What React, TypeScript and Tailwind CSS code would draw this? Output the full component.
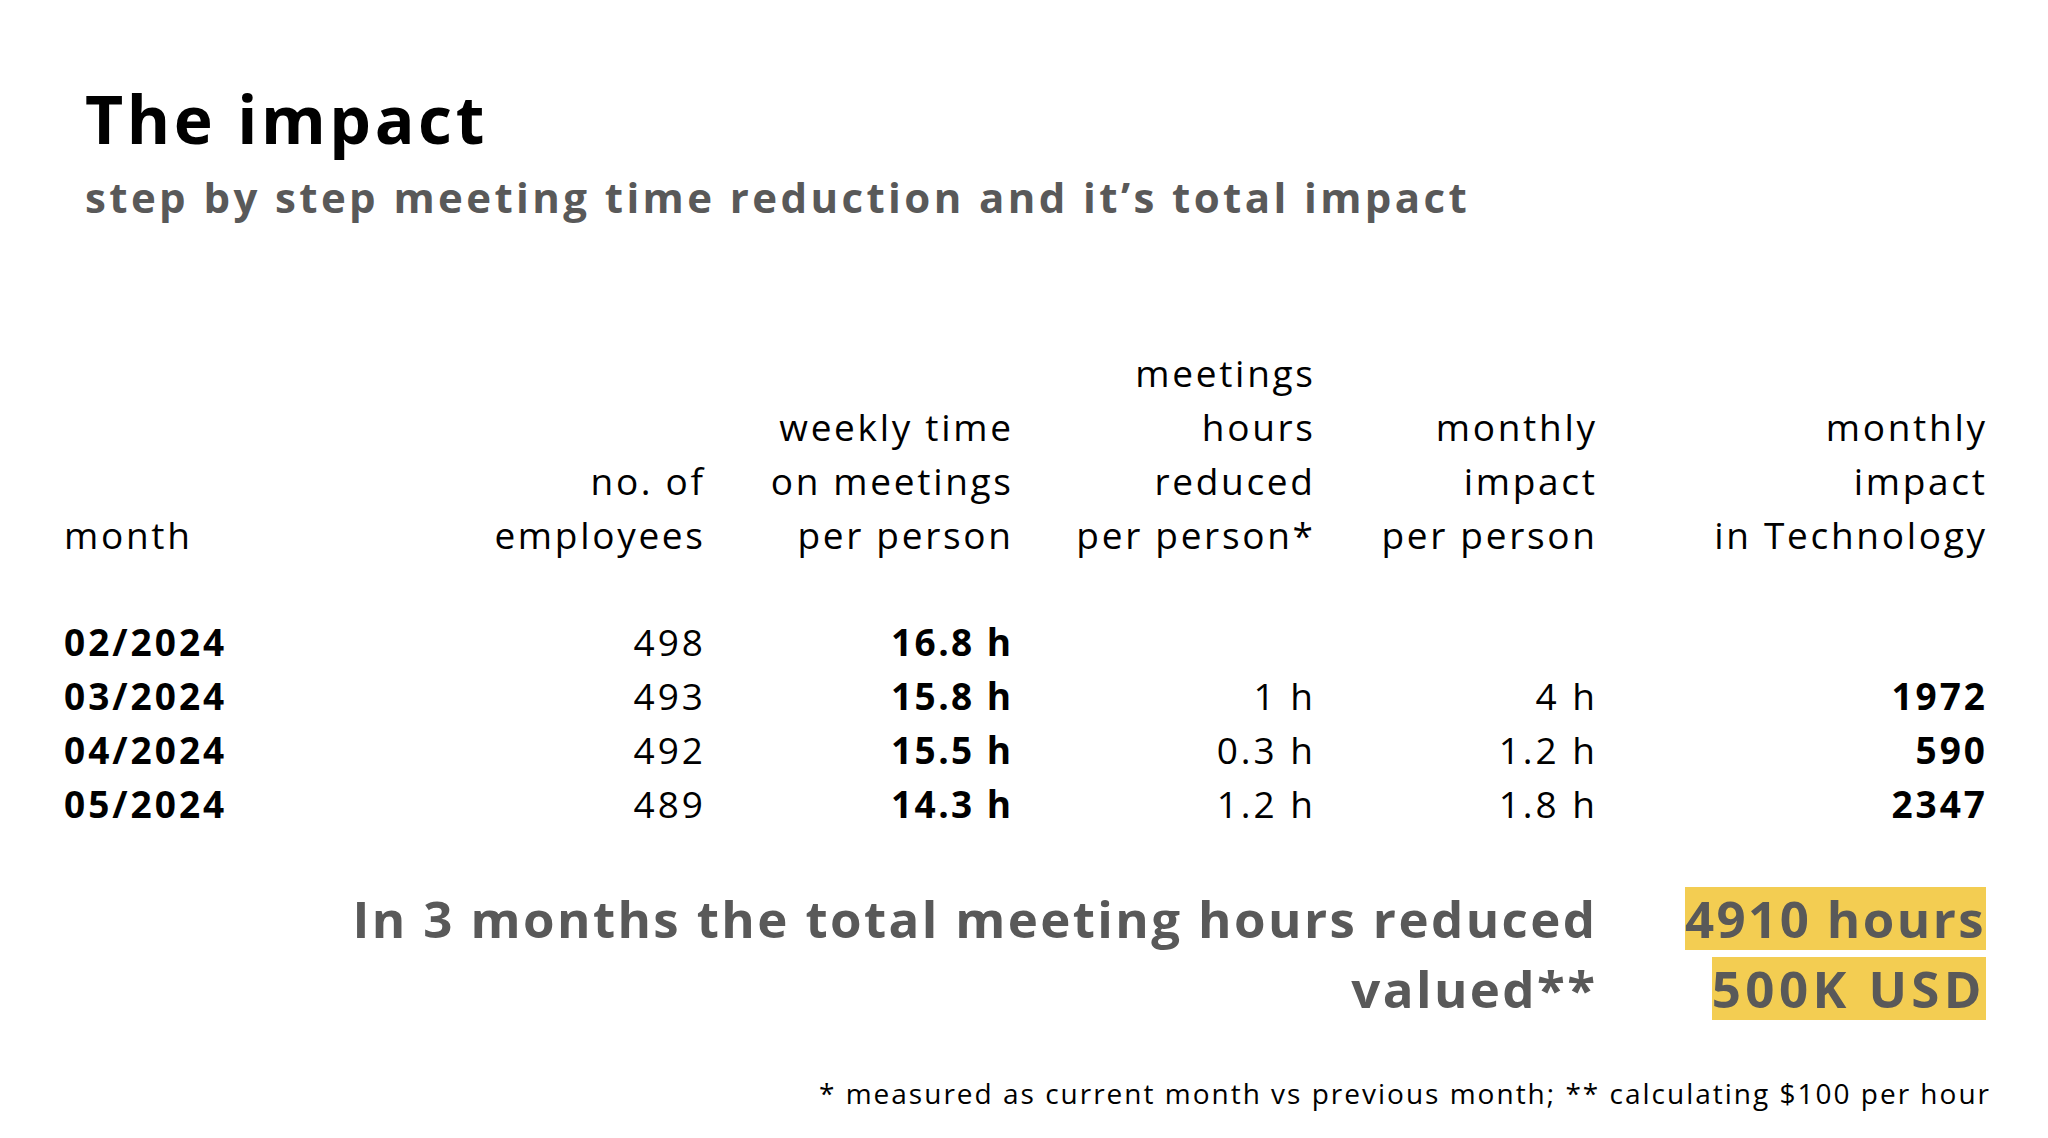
import React from "react";

const font = { fontFamily: '"Open Sans", "Noto Sans", sans-serif' };

type Row = {
  month: string;
  emp: string;
  weekly: string;
  reduced: string;
  perPerson: string;
  tech: string;
};

const rows: Row[] = [
  { month: "02/2024", emp: "498", weekly: "16.8 h", reduced: "", perPerson: "", tech: "" },
  { month: "03/2024", emp: "493", weekly: "15.8 h", reduced: "1 h", perPerson: "4 h", tech: "1972" },
  { month: "04/2024", emp: "492", weekly: "15.5 h", reduced: "0.3 h", perPerson: "1.2 h", tech: "590" },
  { month: "05/2024", emp: "489", weekly: "14.3 h", reduced: "1.2 h", perPerson: "1.8 h", tech: "2347" },
];

export default function App() {
  return (
    <div
      className="w-[2048px] h-[1138px] bg-white text-black overflow-hidden font-['Open_Sans',_'Noto_Sans',_sans-serif]"
      style={font}
    >
      <div className="pl-[85px] pt-[78px]">
        <h1 className="text-[66px] leading-[80px] font-bold tracking-[3.6px] text-black">The impact</h1>
        <p className="mt-[11px] text-[42px] leading-[56px] font-bold text-[#595959] tracking-[3.4px]">
          step by step meeting time reduction and it’s total impact
        </p>
      </div>

      <div className="pl-[64px] pt-[121px] grid grid-cols-[386px_253px_308px_302px_282px_390px] text-[37px] leading-[54px] tracking-[2.7px] font-[370]">
        <div className="flex flex-col justify-end h-[216px]">
          <span>month</span>
        </div>
        <div className="flex flex-col justify-end items-end h-[216px] text-right">
          <span className="-mr-[2.7px]">no. of</span>
          <span className="-mr-[2.7px]">employees</span>
        </div>
        <div className="flex flex-col justify-end items-end h-[216px] text-right">
          <span className="-mr-[2.7px]">weekly time</span>
          <span className="-mr-[2.7px]">on meetings</span>
          <span className="-mr-[2.7px]">per person</span>
        </div>
        <div className="flex flex-col justify-end items-end h-[216px] text-right">
          <span className="-mr-[2.7px]">meetings</span>
          <span className="-mr-[2.7px]">hours</span>
          <span className="-mr-[2.7px]">reduced</span>
          <span className="-mr-[2.7px]">per person*</span>
        </div>
        <div className="flex flex-col justify-end items-end h-[216px] text-right">
          <span className="-mr-[2.7px]">monthly</span>
          <span className="-mr-[2.7px]">impact</span>
          <span className="-mr-[2.7px]">per person</span>
        </div>
        <div className="flex flex-col justify-end items-end h-[216px] text-right">
          <span className="-mr-[2.7px]">monthly</span>
          <span className="-mr-[2.7px]">impact</span>
          <span className="-mr-[2.7px]">in Technology</span>
        </div>

        <div className="col-span-6 h-[53px]" />

        {rows.map((r) => (
          <React.Fragment key={r.month}>
            <div className="font-bold h-[54px] tracking-[3px]">{r.month}</div>
            <div className="text-right h-[54px] tracking-[3px]"><span className="-mr-[3px] inline-block">{r.emp}</span></div>
            <div className="text-right font-bold h-[54px] tracking-[2.4px]"><span className="-mr-[2.4px] inline-block">{r.weekly}</span></div>
            <div className="text-right h-[54px] tracking-[3px]"><span className="-mr-[3px] inline-block">{r.reduced}</span></div>
            <div className="text-right h-[54px] tracking-[3px]"><span className="-mr-[3px] inline-block">{r.perPerson}</span></div>
            <div className="text-right font-bold h-[54px] tracking-[3px]"><span className="-mr-[3px] inline-block">{r.tech}</span></div>
          </React.Fragment>
        ))}
      </div>

      <div className="pt-[56px] pl-[64px] grid grid-cols-[1531px_390px] text-[51px] font-bold text-[#595959] leading-[63px] gap-y-[7px] tracking-[2.4px]">
        <div className="text-right">
          <span className="-mr-[2.4px] inline-block">In 3 months the total meeting hours reduced</span>
        </div>
        <div className="flex justify-end">
          <span className="bg-[#f3cd52] h-[63px] -mr-[1px]">4910 hours</span>
        </div>
        <div className="text-right">
          <span className="-mr-[2.4px] inline-block">valued**</span>
        </div>
        <div className="flex justify-end">
          <span className="bg-[#f3cd52] h-[63px] -mr-[1px] tracking-[4.4px]">500K USD</span>
        </div>
      </div>

      <div className="pt-[55px] w-[1989px] text-right text-[28px] leading-[36px] text-black tracking-[2px] font-[370]">
        <span className="-mr-[2px] inline-block">* measured as current month vs previous month; ** calculating $100 per hour</span>
      </div>
    </div>
  );
}
